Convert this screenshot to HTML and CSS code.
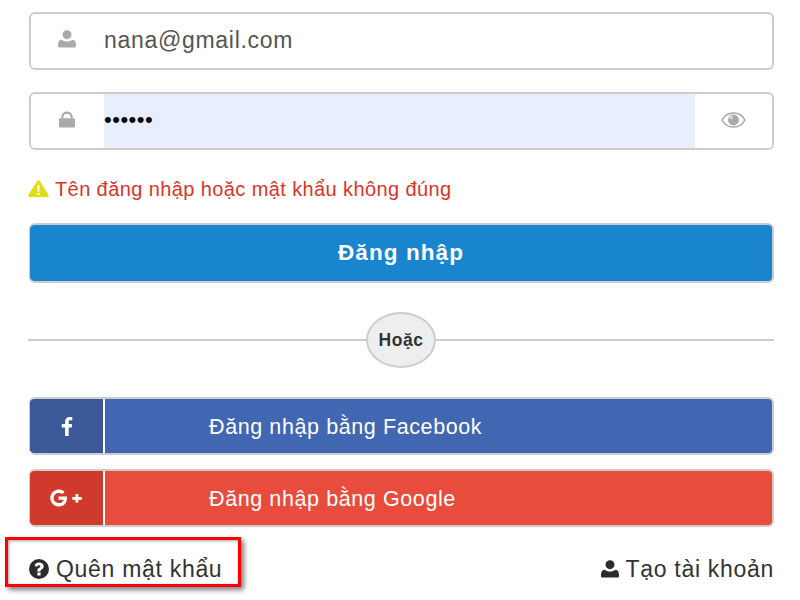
FILE: index.html
```html
<!DOCTYPE html>
<html lang="vi">
<head>
<meta charset="utf-8">
<title>Đăng nhập</title>
<link rel="stylesheet" href="styles.css">
</head>
<body>
<main class="form">
  <div class="field">
    <span class="addon"><svg class="ico-user" viewBox="0 0 20 20"><circle cx="10" cy="5.200" r="5" fill="#aaa"/><path d="M1.600 19.500c-1.200 0-1.600-.8-1.600-2 0-3.600 1-6.700 4-6.700 1.600 1.300 3.700 2 6 2s4.400-.7 6-2c3 0 4 3.100 4 6.700 0 1.200-.4 2-1.600 2z" fill="#aaa"/></svg></span>
    <span class="value">nana@gmail.com</span>
  </div>
  <div class="field">
    <span class="addon"><svg class="ico-lock" viewBox="0 0 18 18"><path d="M1.500 7.500h15c.8 0 1.500.6 1.500 1.400v7.600c0 .8-.7 1.500-1.500 1.500h-15C.7 18 0 17.300 0 16.500V8.900c0-.8.700-1.400 1.500-1.400z" fill="#aaa"/><path d="M3.800 8V5.800a5.200 4.600 0 0 1 10.400 0V8" fill="none" stroke="#aaa" stroke-width="2.400"/></svg></span>
    <span class="value autofill">••••••</span>
    <span class="addon addon-end"><svg class="ico-eye" viewBox="0 0 26 17"><path d="M13 1C7.500 1 3 4.200.8 8.500 3 12.800 7.500 16 13 16s10-3.200 12.200-7.500C23 4.200 18.500 1 13 1z" fill="none" stroke="#aaa" stroke-width="1.700"/><circle cx="13" cy="8.500" r="5.800" fill="#aaa"/><circle cx="10.500" cy="5.800" r="1.800" fill="#ddd"/></svg></span>
  </div>
  <p class="error"><svg class="ico-warn" viewBox="0 0 22 18"><path d="M9.600 1c.6-1.100 2.200-1.100 2.800 0l9.300 15c.6 1-.1 2-1.400 2H1.700C.4 18-.3 17 .3 16z" fill="#dede12"/><path d="M9.700 5.500h2.600l-.4 7h-1.800z M9.700 13.700h2.600V16H9.700z" fill="#fff"/></svg>Tên đăng nhập hoặc mật khẩu không đúng</p>
  <button class="submit" type="button">Đăng nhập</button>
  <div class="divider"><span class="or">Hoặc</span></div>
  <a class="social facebook" href="#">
    <span class="social-icon"><svg class="ico-f" viewBox="0 0 13 20"><path d="M8.300 20v-9h3.200l.5-3.600H8.300V5.200c0-1 .3-1.700 1.800-1.700h2V.2C11.700.1 10.600 0 9.300 0 6.500 0 4.500 1.700 4.500 4.800v2.600H1V11h3.500v9z" fill="#fff"/></svg></span>
    <span class="social-label">Đăng nhập bằng Facebook</span>
  </a>
  <a class="social google" href="#">
    <span class="social-icon"><svg class="ico-g" viewBox="0 0 33 17"><path d="M8.600 7v3.200h5c-.4 1.900-2 3.400-5 3.400a5.100 5.100 0 0 1 0-10.200c1.400 0 2.600.5 3.500 1.400l2.500-2.500A8.500 8.500 0 1 0 8.600 17c5 0 8.400-3.500 8.400-8.500 0-.5 0-1-.1-1.500z" fill="#fff"/><path d="M25.500 4.500h2.800v2.900h3.700v2.800h-3.700v2.900h-2.800v-2.900h-3.200V7.400h3.200z" fill="#fff"/></svg></span>
    <span class="social-label">Đăng nhập bằng Google</span>
  </a>
  <div class="links">
    <a class="link" href="#"><svg class="ico-q" viewBox="0 0 20 20"><path fill-rule="evenodd" d="M10 0a10 10 0 1 1 0 20 10 10 0 0 1 0-20zm-1.600 13.500v3h3.200v-3zM10 3.500c-2.400 0-4 1.200-4.500 3.300l2.600 1c.3-1 .9-1.600 1.800-1.600.9 0 1.500.4 1.500 1.100 0 .7-.5 1-1.300 1.500-1 .6-1.700 1.400-1.700 2.700v1h3.100v-.7c0-.6.400-.9 1.100-1.300 1.200-.7 2.100-1.600 2.100-3.200 0-2.400-2.100-3.800-4.700-3.800z" fill="#2b2b2b"/></svg>Quên mật khẩu</a>
    <a class="link" href="#"><svg class="ico-person" viewBox="0 0 20 20"><circle cx="10" cy="5.200" r="5" fill="#2b2b2b"/><path d="M1.600 19.500c-1.200 0-1.600-.8-1.600-2 0-3.600 1-6.700 4-6.700 1.600 1.300 3.700 2 6 2s4.400-.7 6-2c3 0 4 3.100 4 6.700 0 1.200-.4 2-1.600 2z" fill="#2b2b2b"/></svg>Tạo tài khoản</a>
  </div>
</main>
<div class="highlight"></div>
</body>
</html>
```

FILE: styles.css
```css
* { box-sizing: border-box; }
html, body { margin: 0; height: 600px; overflow: hidden; background: #fff; }
body {
  position: relative;
  padding: 12px 26px 0 29px;
  font-family: "Liberation Sans", Arial, sans-serif;
}
svg { display: block; flex: none; }
.form { display: flex; flex-direction: column; }

.field {
  display: flex;
  height: 58px;
  margin-bottom: 22px;
  border: 2px solid #ccc;
  border-radius: 6px;
  overflow: hidden;
}
.addon {
  flex: none;
  width: 73px;
  display: flex;
  align-items: center;
  justify-content: center;
  padding: 0 2px 4px 0;
  background: #fff;
}
.addon-end { width: 77px; padding: 0 0 3px; }
.value {
  flex: 1;
  display: flex;
  align-items: center;
  padding-bottom: 2px;
  font-size: 23px;
  letter-spacing: .7px;
  color: #555;
}
.autofill { background: #e8eefb; color: #000; font-size: 22px; letter-spacing: .5px; padding-bottom: 3px; }
.ico-user { width: 18px; height: 18px; }
.ico-lock { width: 16px; height: 17px; }
.ico-eye { width: 25px; height: 16px; }

.error {
  display: flex;
  align-items: center;
  gap: 6px;
  height: 24px;
  margin: 5px 0 22px;
  font-size: 20px;
  letter-spacing: .4px;
  color: #d9342b;
}
.ico-warn { width: 21px; height: 17px; margin: -2px 0 0 -1px; }

.submit {
  height: 60px;
  padding: 0;
  border: solid #ccc;
  border-width: 2px 2px 2px 1px;
  border-radius: 6px;
  background: #1985cf;
  color: #fff;
  font: bold 22.500px "Liberation Sans", Arial, sans-serif;
  letter-spacing: 1.1px;
}

.divider {
  display: flex;
  justify-content: center;
  height: 56px;
  margin: 29px 0 29px -1px;
  background: linear-gradient(#ccc, #ccc) 0 27px / 100% 2px no-repeat;
}
.or {
  width: 70px;
  height: 56px;
  display: flex;
  align-items: center;
  justify-content: center;
  border: 2px solid #ccc;
  border-radius: 50%;
  background: #eee;
  color: #333;
  font-size: 17.500px;
  font-weight: bold;
  letter-spacing: .6px;
}

.social {
  display: flex;
  height: 58px;
  margin-bottom: 14px;
  border: solid #ccc;
  border-width: 2px 2px 2px 1px;
  border-radius: 6px;
  overflow: hidden;
  color: #fff;
  text-decoration: none;
}
.social-icon {
  flex: none;
  width: 73px;
  display: flex;
  align-items: center;
  justify-content: center;
  border-right: 2px solid #fff;
  box-sizing: content-box;
}
.social-label {
  flex: 1;
  display: flex;
  align-items: center;
  padding: 2px 0 0 104px;
  font-size: 21.500px;
  letter-spacing: .6px;
}
.facebook { background: #4267b2; }
.facebook .social-icon { background: #3b5998; }
.google { background: #e84c3d; }
.google .social-icon { background: #cf3a2c; }
.ico-f { width: 14px; height: 19px; }
.ico-g { width: 33px; height: 18px; }

.links {
  display: flex;
  justify-content: space-between;
  margin-top: 14px;
}
.link {
  display: flex;
  align-items: center;
  gap: 7px;
  height: 28px;
  font-size: 23px;
  letter-spacing: .7px;
  color: #333;
  text-decoration: none;
}
.ico-q { width: 20px; height: 20px; }
.ico-person { width: 18px; height: 18px; }

.highlight {
  position: absolute;
  left: 5px;
  top: 537px;
  width: 236px;
  height: 50px;
  border: 3px solid #f00;
  box-shadow: 3px 3px 5px rgba(0, 0, 0, .5), inset 1px 1px 3px rgba(0, 0, 0, .35);
}
```
